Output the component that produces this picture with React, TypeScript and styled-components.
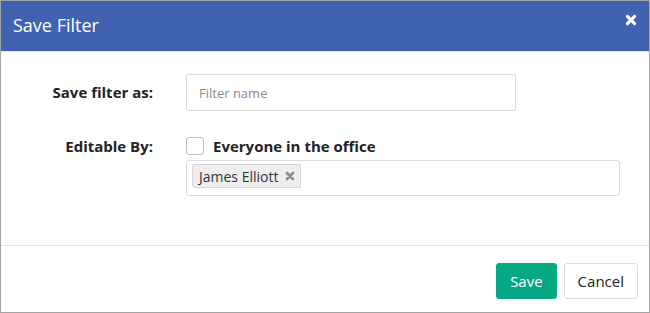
import React from 'react'
import styled, { createGlobalStyle } from 'styled-components'

const GlobalStyle = createGlobalStyle`
  html, body {
    margin: 0;
    padding: 0;
    background: #ffffff;
  }
  * {
    box-sizing: border-box;
  }
`

const Dialog = styled.div`
  width: 650px;
  height: 313px;
  border: 1px solid #a3a3a3;
  background: #ffffff;
  display: flex;
  flex-direction: column;
  font-family: 'Open Sans', 'Noto Sans', sans-serif;
  color: #222;
`

const Header = styled.div`
  height: 51px;
  flex: none;
  display: flex;
  align-items: center;
  justify-content: space-between;
  padding: 0 12px 0 12px;
  background: #4162b1;
  border-bottom: 1px solid #e2e2e2;
  color: #ffffff;
`

const Title = styled.h1`
  margin: 0;
  font-size: 18px;
  font-weight: 400;
  line-height: 24px;
  padding-bottom: 2px;
`

const CloseButton = styled.button`
  border: 0;
  background: none;
  padding: 0;
  color: #ffffff;
  display: flex;
  margin-top: -13px;
  cursor: pointer;
  svg {
    width: 12px;
    height: 12px;
  }
`

const Body = styled.div`
  flex: 1;
  display: grid;
  grid-template-columns: 152px 330px 104px;
  grid-auto-rows: min-content;
  column-gap: 33px;
  padding-top: 22px;
`

const Label = styled.label<{ $top?: number }>`
  text-align: right;
  font-size: 15px;
  font-weight: 700;
  line-height: 20px;
  padding-top: ${p => p.$top ?? 0}px;
`

const TextInput = styled.input`
  height: 37px;
  width: 330px;
  border: 1px solid #dcdcdc;
  border-radius: 2px;
  padding: 0 12px;
  font-family: inherit;
  font-size: 13px;
  color: #333;
  outline: none;
  &::placeholder {
    color: #8a8a8a;
  }
`

const Field = styled.div`
  grid-column: 2 / span 2;
  margin-top: 25px;
  display: flex;
  flex-direction: column;
  gap: 4px;
`

const CheckRow = styled.label`
  display: flex;
  align-items: center;
  gap: 9px;
  font-size: 15px;
  font-weight: 700;
  line-height: 20px;
`

const CheckBox = styled.span`
  width: 18px;
  height: 18px;
  border: 1px solid #bdbdbd;
  border-radius: 3px;
  background: #fff;
`

const TagBox = styled.div`
  width: 434px;
  height: 36px;
  border: 1px solid #dcdcdc;
  border-radius: 3px;
  padding: 3px 5px;
  display: flex;
  align-items: flex-start;
`

const Tag = styled.span`
  display: inline-flex;
  align-items: center;
  gap: 7px;
  height: 24px;
  padding: 0 5px 0 6px;
  background: #eeeeee;
  border: 1px solid #d6d6d6;
  border-radius: 2px;
  font-size: 14px;
  color: #333;
  svg {
    width: 10px;
    height: 10px;
    color: #8d8d8d;
  }
`

const Footer = styled.div`
  height: 67px;
  flex: none;
  border-top: 1px solid #e2e2e2;
  display: flex;
  justify-content: flex-end;
  align-items: flex-start;
  gap: 7px;
  padding: 17px 11px 0 0;
`

const Button = styled.button<{ $primary?: boolean }>`
  height: 36px;
  padding: 0 13px;
  border-radius: 3px;
  font-family: inherit;
  font-size: 15px;
  cursor: pointer;
  border: 1px solid ${p => (p.$primary ? '#06a884' : '#dddddd')};
  background: ${p => (p.$primary ? '#06a884' : '#ffffff')};
  color: ${p => (p.$primary ? '#ffffff' : '#222222')};
`

const Cross = () => (
  <svg viewBox="0 0 10 10" aria-hidden="true">
    <path
      d="M2 2 L8 8 M8 2 L2 8"
      stroke="currentColor"
      strokeWidth="2.6"
      strokeLinecap="round"
      fill="none"
    />
  </svg>
)

export default function App() {
  return (
    <>
      <GlobalStyle />
      <Dialog>
        <Header>
          <Title>Save Filter</Title>
          <CloseButton aria-label="Close">
            <Cross />
          </CloseButton>
        </Header>
        <Body>
          <Label $top={8}>Save filter as:</Label>
          <TextInput placeholder="Filter name" />
          <span />
          <Label $top={25}>Editable By:</Label>
          <Field>
            <CheckRow>
              <CheckBox />
              Everyone in the office
            </CheckRow>
            <TagBox>
              <Tag>
                James Elliott
                <Cross />
              </Tag>
            </TagBox>
          </Field>
        </Body>
        <Footer>
          <Button $primary>Save</Button>
          <Button>Cancel</Button>
        </Footer>
      </Dialog>
    </>
  )
}
